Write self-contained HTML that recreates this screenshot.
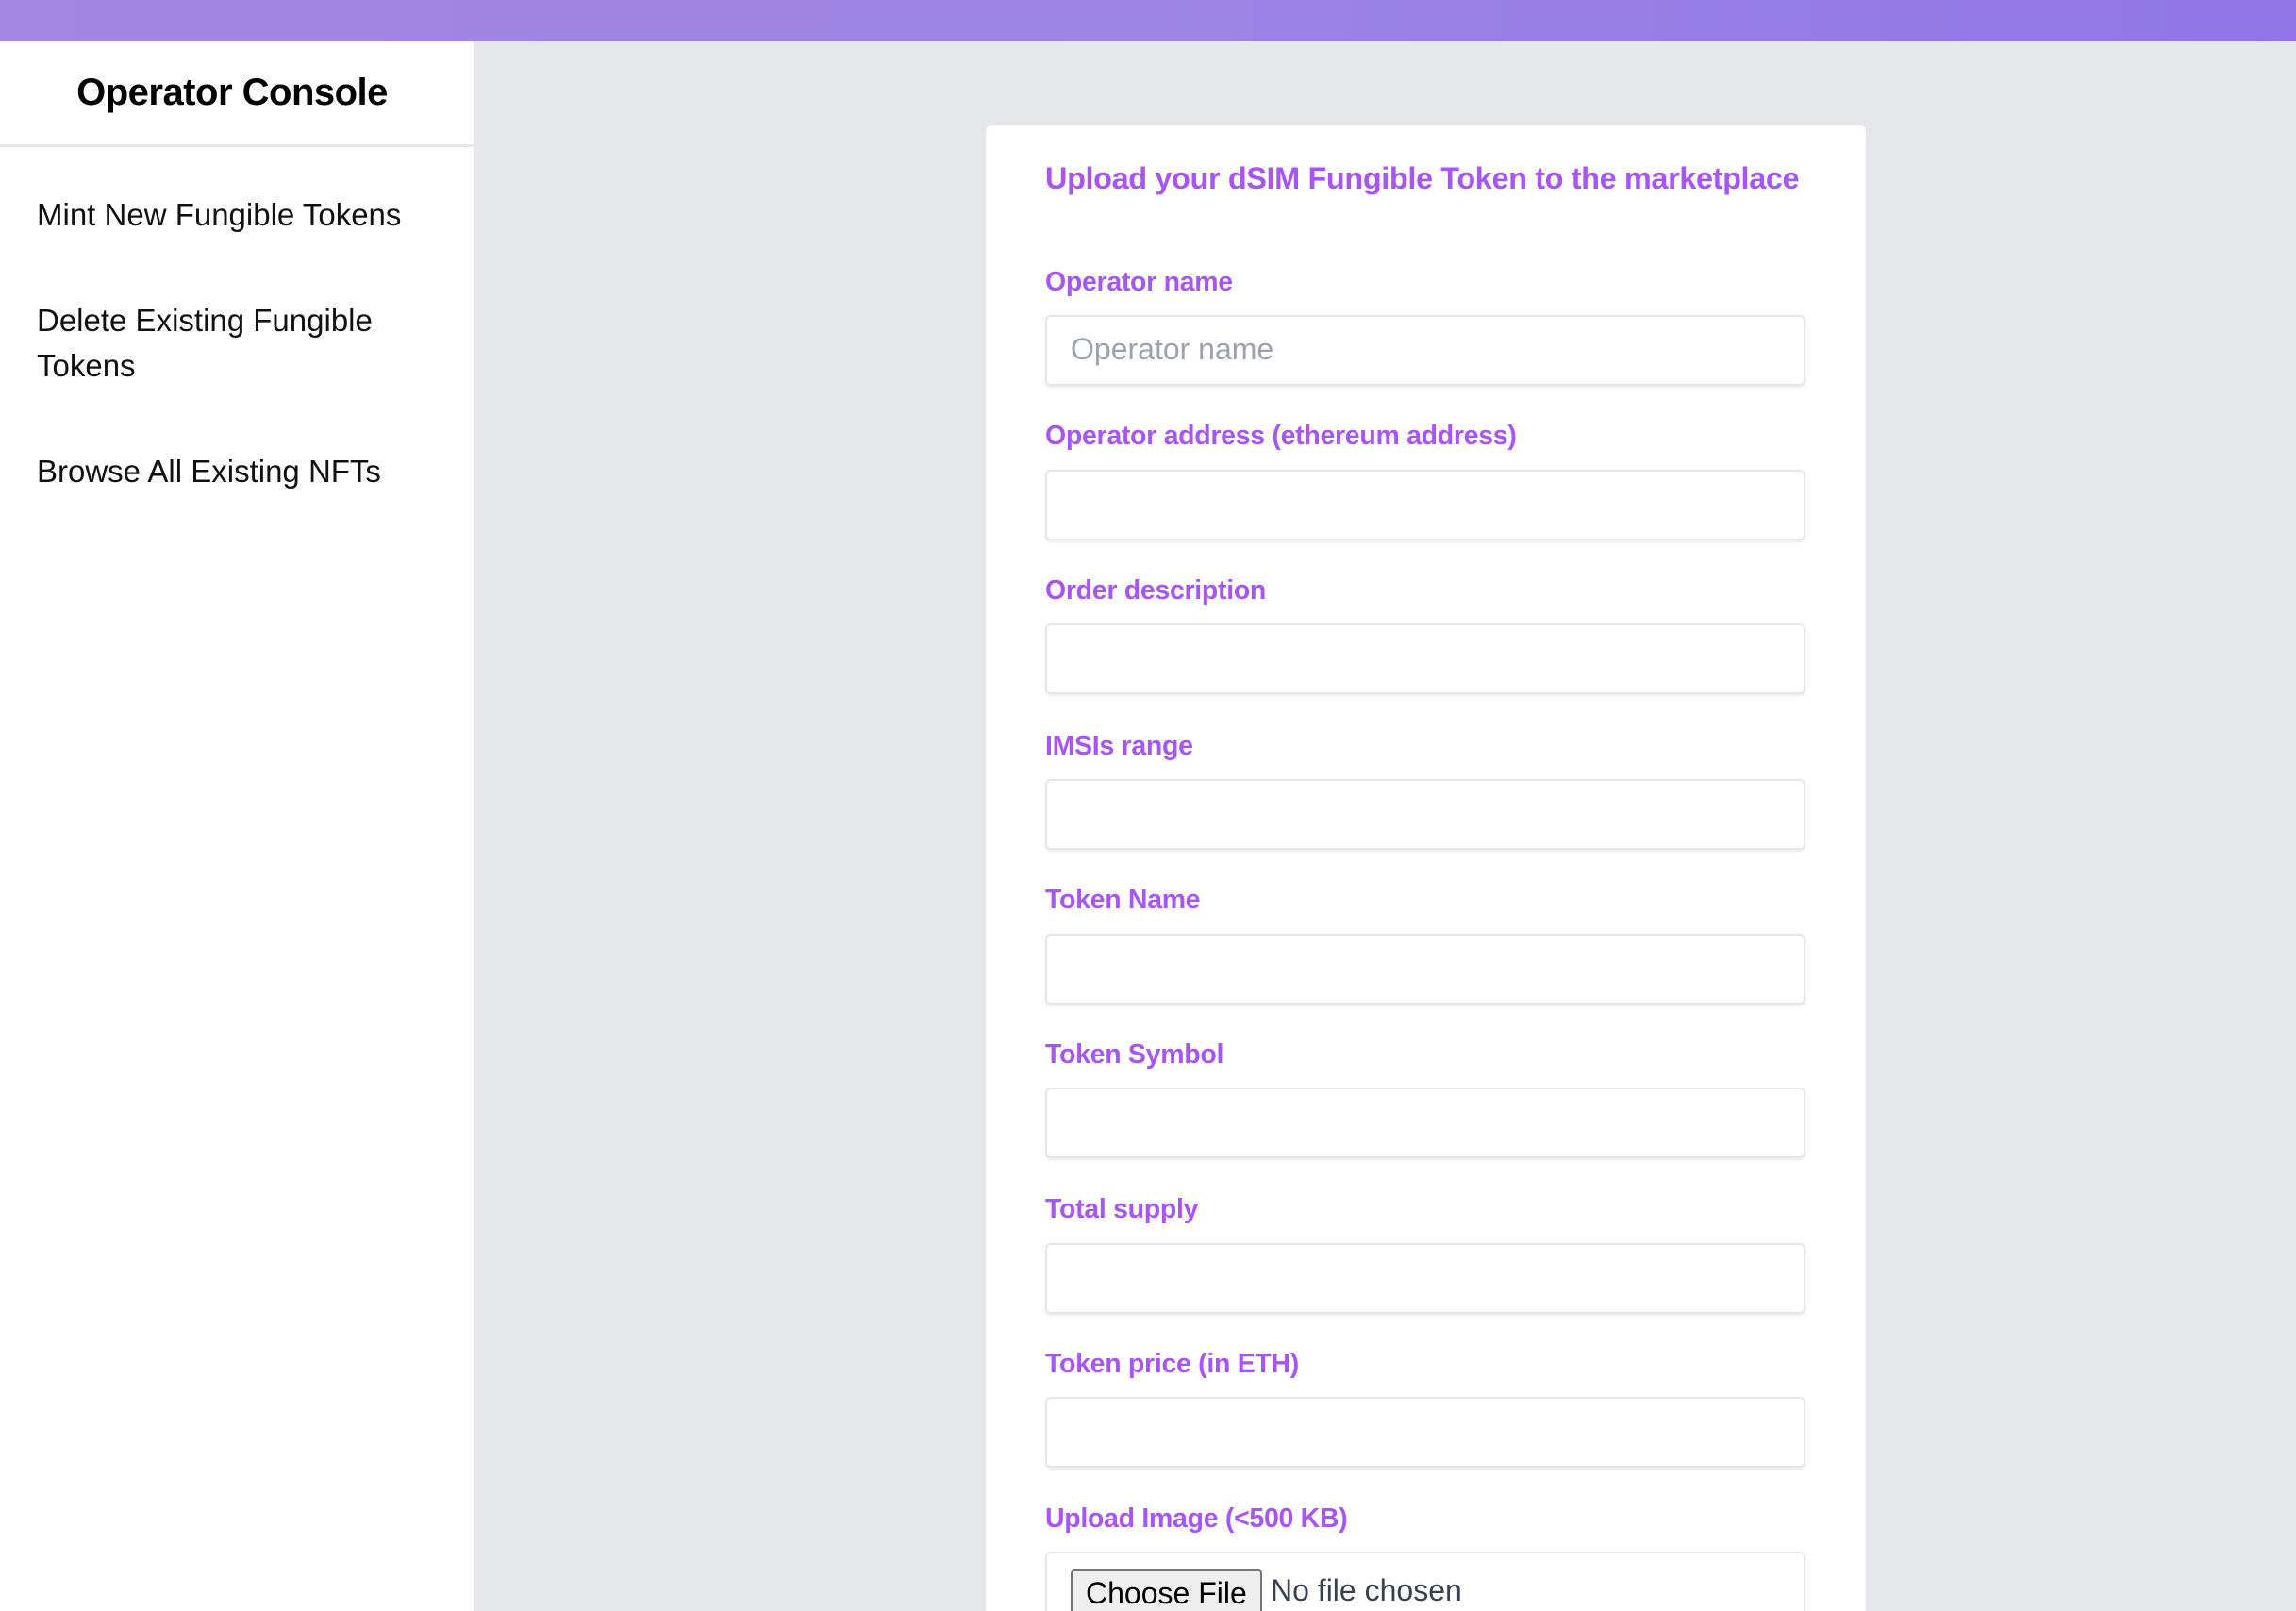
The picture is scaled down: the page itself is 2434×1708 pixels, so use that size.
<!DOCTYPE html>
<html><head><meta charset="utf-8"><style>
*{box-sizing:border-box;margin:0;padding:0}
html,body{width:2434px;height:1708px;overflow:hidden}
body{background:#e5e7eb;font-family:"Liberation Sans",sans-serif}
.wrap{position:relative;width:2434px;height:1708px;overflow:hidden}
.top{position:absolute;left:0;top:0;width:2434px;height:43px;background:linear-gradient(90deg,#a385e2,#9d84e4 50%,#9175e7)}
.side{position:absolute;left:0;top:43px;width:502px;height:1665px;background:#fff}
.title{position:absolute;left:0;width:492px;top:76px;text-align:center;font-size:40px;font-weight:600;color:#000;letter-spacing:-0.5px}
.div{position:absolute;left:0;top:153px;width:502px;height:3px;background:#e5e7eb}
.nav{position:absolute;left:39px;font-size:33px;color:#111;line-height:48px}
.card{position:absolute;left:1045px;top:133px;width:933px;height:1575px;background:#fff;border-radius:6px 6px 0 0}
.h{position:absolute;left:1108px;top:171px;font-size:32.5px;font-weight:600;color:#a855f7;letter-spacing:-0.4px}
.l{position:absolute;left:1108px;font-size:28.5px;font-weight:600;color:#a855f7;letter-spacing:-0.3px}
.i{position:absolute;left:1108px;width:806px;height:75px;border:2px solid #e5e7eb;border-radius:6px;background:#fff;box-shadow:0 2px 3px rgba(0,0,0,.08)}
.ph{position:absolute;left:1135px;top:352px;font-size:32px;color:#9ca3af}
.btn{position:absolute;left:1135px;top:1664px;height:50px;padding:0 14px;border:2px solid #767676;border-radius:4px;background:#efefef;font-size:32px;line-height:46px;color:#000}
.nf{position:absolute;left:1347px;top:1668px;font-size:32px;color:#374151}
</style></head><body><div class="wrap">
<div class="top"></div>
<div class="side"></div>
<div class="title">Operator Console</div>
<div class="div"></div>
<div class="nav" style="top:204px">Mint New Fungible Tokens</div>
<div class="nav" style="top:316px">Delete Existing Fungible<br>Tokens</div>
<div class="nav" style="top:476px">Browse All Existing NFTs</div>
<div class="card"></div>
<div class="h">Upload your dSIM Fungible Token to the marketplace</div>
<div class="l" style="top:283px">Operator name</div>
<div class="i" style="top:334px"></div>
<div class="ph">Operator name</div>
<div class="l" style="top:446px">Operator address (ethereum address)</div>
<div class="i" style="top:498px"></div>
<div class="l" style="top:610px">Order description</div>
<div class="i" style="top:661px"></div>
<div class="l" style="top:775px">IMSIs range</div>
<div class="i" style="top:826px"></div>
<div class="l" style="top:938px">Token Name</div>
<div class="i" style="top:990px"></div>
<div class="l" style="top:1102px">Token Symbol</div>
<div class="i" style="top:1153px"></div>
<div class="l" style="top:1266px">Total supply</div>
<div class="i" style="top:1318px"></div>
<div class="l" style="top:1430px">Token price (in ETH)</div>
<div class="i" style="top:1481px"></div>
<div class="l" style="top:1594px">Upload Image (&lt;500 KB)</div>
<div class="i" style="top:1645px;height:90px"></div>
<div class="btn">Choose File</div>
<div class="nf">No file chosen</div>
</div></body></html>
